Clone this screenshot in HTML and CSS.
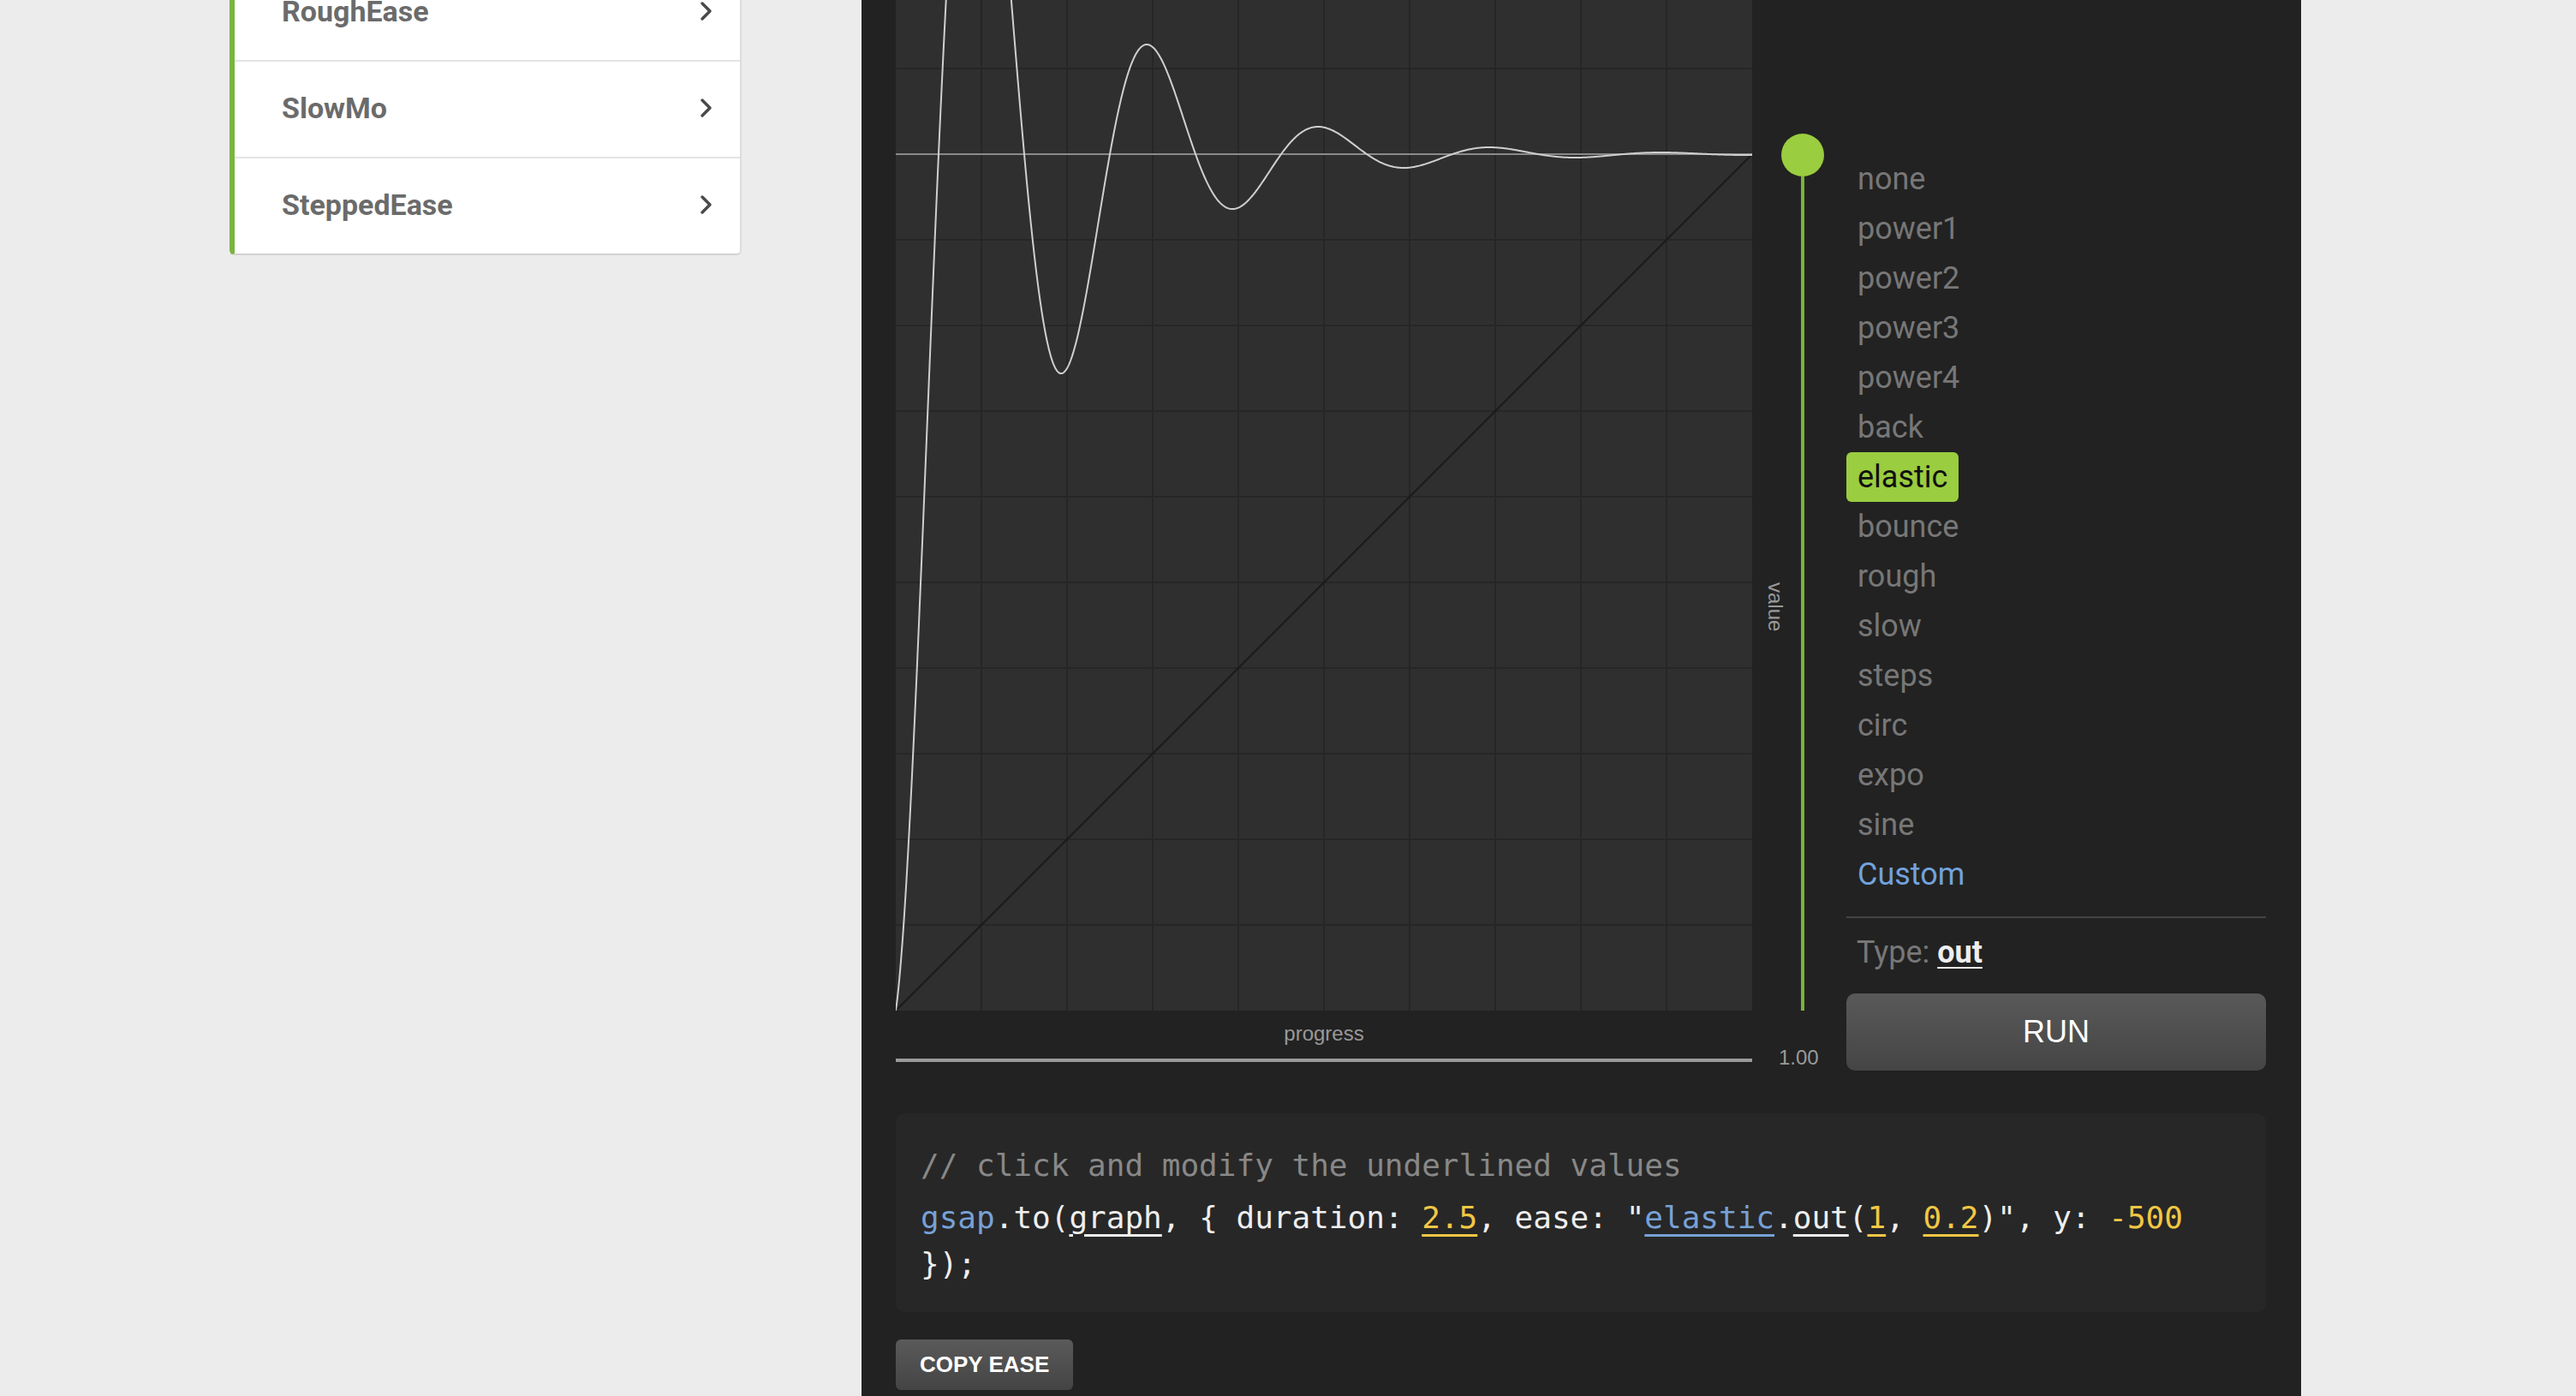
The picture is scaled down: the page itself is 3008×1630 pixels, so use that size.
FILE: index.html
```html
<!DOCTYPE html>
<html lang="en">
<head>
<meta charset="utf-8">
<title>Eases</title>
<link rel="stylesheet" href="styles.css">
</head>
<body>
<div class="page">
  <aside class="sidebar">
    <ul class="ease-menu">
      <li class="ease-row"><span>RoughEase</span><svg class="chev" width="16" height="24" viewBox="0 0 16 24"><polyline points="3,3 12,12 3,21"/></svg></li>
      <li class="ease-row"><span>SlowMo</span><svg class="chev" width="16" height="24" viewBox="0 0 16 24"><polyline points="3,3 12,12 3,21"/></svg></li>
      <li class="ease-row"><span>SteppedEase</span><svg class="chev" width="16" height="24" viewBox="0 0 16 24"><polyline points="3,3 12,12 3,21"/></svg></li>
    </ul>
  </aside>
  <main class="panel">
    <div class="viz">
      <div class="graph-col">
        <svg class="graph" width="1000" height="1180" viewBox="0 0 1000 1180">
          <rect width="1000" height="1180" fill="#2f2f2f"/>
          <g class="grid">
            <line x1="100" y1="0" x2="100" y2="1180"/>
            <line x1="200" y1="0" x2="200" y2="1180"/>
            <line x1="300" y1="0" x2="300" y2="1180"/>
            <line x1="400" y1="0" x2="400" y2="1180"/>
            <line x1="500" y1="0" x2="500" y2="1180"/>
            <line x1="600" y1="0" x2="600" y2="1180"/>
            <line x1="700" y1="0" x2="700" y2="1180"/>
            <line x1="800" y1="0" x2="800" y2="1180"/>
            <line x1="900" y1="0" x2="900" y2="1180"/>
            <line x1="0" y1="80" x2="1000" y2="80"/>
            <line x1="0" y1="180" x2="1000" y2="180"/>
            <line x1="0" y1="280" x2="1000" y2="280"/>
            <line x1="0" y1="380" x2="1000" y2="380"/>
            <line x1="0" y1="480" x2="1000" y2="480"/>
            <line x1="0" y1="580" x2="1000" y2="580"/>
            <line x1="0" y1="680" x2="1000" y2="680"/>
            <line x1="0" y1="780" x2="1000" y2="780"/>
            <line x1="0" y1="880" x2="1000" y2="880"/>
            <line x1="0" y1="980" x2="1000" y2="980"/>
            <line x1="0" y1="1080" x2="1000" y2="1080"/>
          </g>
          <line class="linear" x1="0" y1="1180" x2="1000" y2="180"/>
          <line class="target" x1="0" y1="180" x2="1000" y2="180"/>
          <path id="curve" class="curve" d="M0 1180"/>
        </svg>
        <div class="progress-label">progress</div>
        <div class="progress-bar"></div>
      </div>
      <div class="slider-col">
        <div class="slider">
          <div class="vaxis"><span>value</span></div>
          <div class="track"><div class="knob"></div><div class="rail"></div></div>
        </div>
        <div class="vmax">1.00</div>
      </div>
      <div class="controls">
        <ul class="ease-list">
          <li>none</li>
          <li>power1</li>
          <li>power2</li>
          <li>power3</li>
          <li>power4</li>
          <li>back</li>
          <li class="active">elastic</li>
          <li>bounce</li>
          <li>rough</li>
          <li>slow</li>
          <li>steps</li>
          <li>circ</li>
          <li>expo</li>
          <li>sine</li>
          <li class="custom">Custom</li>
        </ul>
        <div class="sep"></div>
        <div class="type">Type: <u>out</u></div>
        <button class="run">RUN</button>
      </div>
    </div>
    <div class="code">
      <div class="line comment">// click and modify the underlined values</div>
      <div class="line"><span class="kw">gsap</span>.to(<u>graph</u>, { duration: <u class="num">2.5</u>, ease: "<u class="kw">elastic</u>.<u>out</u>(<u class="num">1</u>, <u class="num">0.2</u>)", y: <span class="num">-500</span></div>
      <div class="line">});</div>
    </div>
    <button class="copy">COPY EASE</button>
  </main>
</div>
<script src="script.js"></script>
</body>
</html>
```

FILE: styles.css
```css
* { box-sizing: border-box; }
html, body { margin: 0; padding: 0; }
body {
  background: #ececec;
  font-family: Roboto, "Noto Sans", sans-serif;
  overflow: hidden;
}
.page {
  display: flex;
  align-items: flex-start;
  padding-left: 268px;
  height: 1630px;
}

/* sidebar */
.sidebar { width: 598px; margin-right: 140px; }
.ease-menu {
  list-style: none;
  margin: -41px 0 0;
  padding: 0;
  background: #fff;
  border-left: 6px solid #79b540;
  border-right: 2px solid #dcdcdc;
  border-bottom: 2px solid #d2d2d2;
  border-radius: 0 0 6px 6px;
}
.ease-row {
  display: flex;
  align-items: center;
  justify-content: space-between;
  height: 113px;
  padding: 0 31px 3px 55px;
  border-bottom: 2px solid #e4e4e4;
  font-weight: 700;
  font-size: 34px;
  color: #6b6b6b;
}
.ease-row:last-child { border-bottom: none; height: 111px; }
.chev polyline {
  fill: none;
  stroke: #4a4a4a;
  stroke-width: 3.5;
  stroke-linecap: round;
  stroke-linejoin: round;
}

/* panel */
.panel {
  width: 1681px;
  height: 1630px;
  background: #222;
  padding: 0 40px;
}
.viz { display: flex; align-items: flex-start; }
.graph-col { width: 1000px; }
.graph { display: block; }
.grid line { stroke: #262626; stroke-width: 2; }
.linear { stroke: #1b1b1b; stroke-width: 2; }
.target { stroke: #8a8a8a; stroke-width: 2; }
.curve { fill: none; stroke: #cfcfcf; stroke-width: 2; }
.progress-label {
  margin-top: 12px;
  font: 24px/30px "Liberation Sans", Arial, sans-serif;
  color: #999;
  text-align: center;
}
.progress-bar { margin-top: 14px; height: 4px; background: #9a9a9a; }

.slider-col { width: 110px; }
.slider { display: flex; height: 1180px; }
.vaxis {
  width: 34px;
  display: flex;
  justify-content: flex-end;
  align-items: flex-start;
  padding-top: 680px;
}
.vaxis span {
  writing-mode: vertical-rl;
  font: 24px/24px "Liberation Sans", Arial, sans-serif;
  color: #999;
  margin-right: -5px;
}
.track {
  width: 50px;
  display: flex;
  flex-direction: column;
  align-items: center;
  padding-top: 156px;
}
.knob {
  flex: none;
  width: 50px;
  height: 50px;
  border-radius: 50%;
  background: #9acd3f;
}
.rail { flex: 1; width: 4px; background: #79b33d; }
.vmax {
  margin-top: 41px;
  padding-left: 31px;
  font: 24px/28px "Liberation Sans", Arial, sans-serif;
  color: #9a9a9a;
}

.controls { width: 490px; padding-top: 180px; }
.ease-list {
  list-style: none;
  margin: 0;
  padding: 0;
  display: flex;
  flex-direction: column;
  align-items: flex-start;
}
.ease-list li {
  height: 58px;
  line-height: 58px;
  padding: 0 13px;
  font-size: 36px;
  color: #777;
  border-radius: 6px;
}
.ease-list li.active { background: #9acd3f; color: #111; }
.ease-list li.custom { color: #72a2dc; }
.sep { margin-top: 20px; height: 2px; background: #444; }
.type {
  margin-top: 20px;
  padding-left: 12px;
  font-size: 36px;
  line-height: 40px;
  color: #777;
}
.type u {
  color: #eee;
  font-weight: 700;
  text-decoration-thickness: 2px;
  text-underline-offset: 5px;
}
.run {
  display: block;
  margin-top: 28px;
  width: 490px;
  height: 90px;
  border: none;
  border-radius: 10px;
  background: linear-gradient(#595959, #454545);
  color: #fff;
  font: 36px "Liberation Sans", Arial, sans-serif;
}

.code {
  width: 1600px;
  margin-top: 50px;
  padding: 34px 29px 29px;
  background: #272727;
  border-radius: 10px;
  font: 36px/54px "DejaVu Sans Mono", "Liberation Mono", monospace;
  color: #eee;
}
.code .line { white-space: pre; }
.code .comment { color: #888; margin-bottom: 7px; }
.kw { color: #77a1d6; }
.num { color: #f2c744; }
.code u { text-decoration-thickness: 3px; text-underline-offset: 7px; }
.copy {
  display: block;
  margin-top: 32px;
  height: 59px;
  padding: 0 28px;
  border: none;
  border-radius: 6px;
  background: linear-gradient(#5a5a5a, #444);
  color: #fff;
  font: 700 26px "Liberation Sans", Arial, sans-serif;
}
```

FILE: script.js
```js
(function () {
  var amplitude = 1, period = 0.2;
  var p1 = amplitude >= 1 ? amplitude : 1;
  var p2 = period / (amplitude < 1 ? amplitude : 1);
  var p3 = p2 / (2 * Math.PI) * (Math.asin(1 / p1) || 0);
  var k = 2 * Math.PI / p2;
  function ease(p) {
    return p === 1 ? 1 : p1 * Math.pow(2, -10 * p) * Math.sin((p - p3) * k) + 1;
  }
  var d = '';
  for (var i = 0; i <= 1000; i++) {
    var p = i / 1000;
    var x = p * 1000;
    var y = 1180 - ease(p) * 1000;
    d += (i ? 'L' : 'M') + x.toFixed(2) + ' ' + y.toFixed(2);
  }
  document.getElementById('curve').setAttribute('d', d);
})();
```
